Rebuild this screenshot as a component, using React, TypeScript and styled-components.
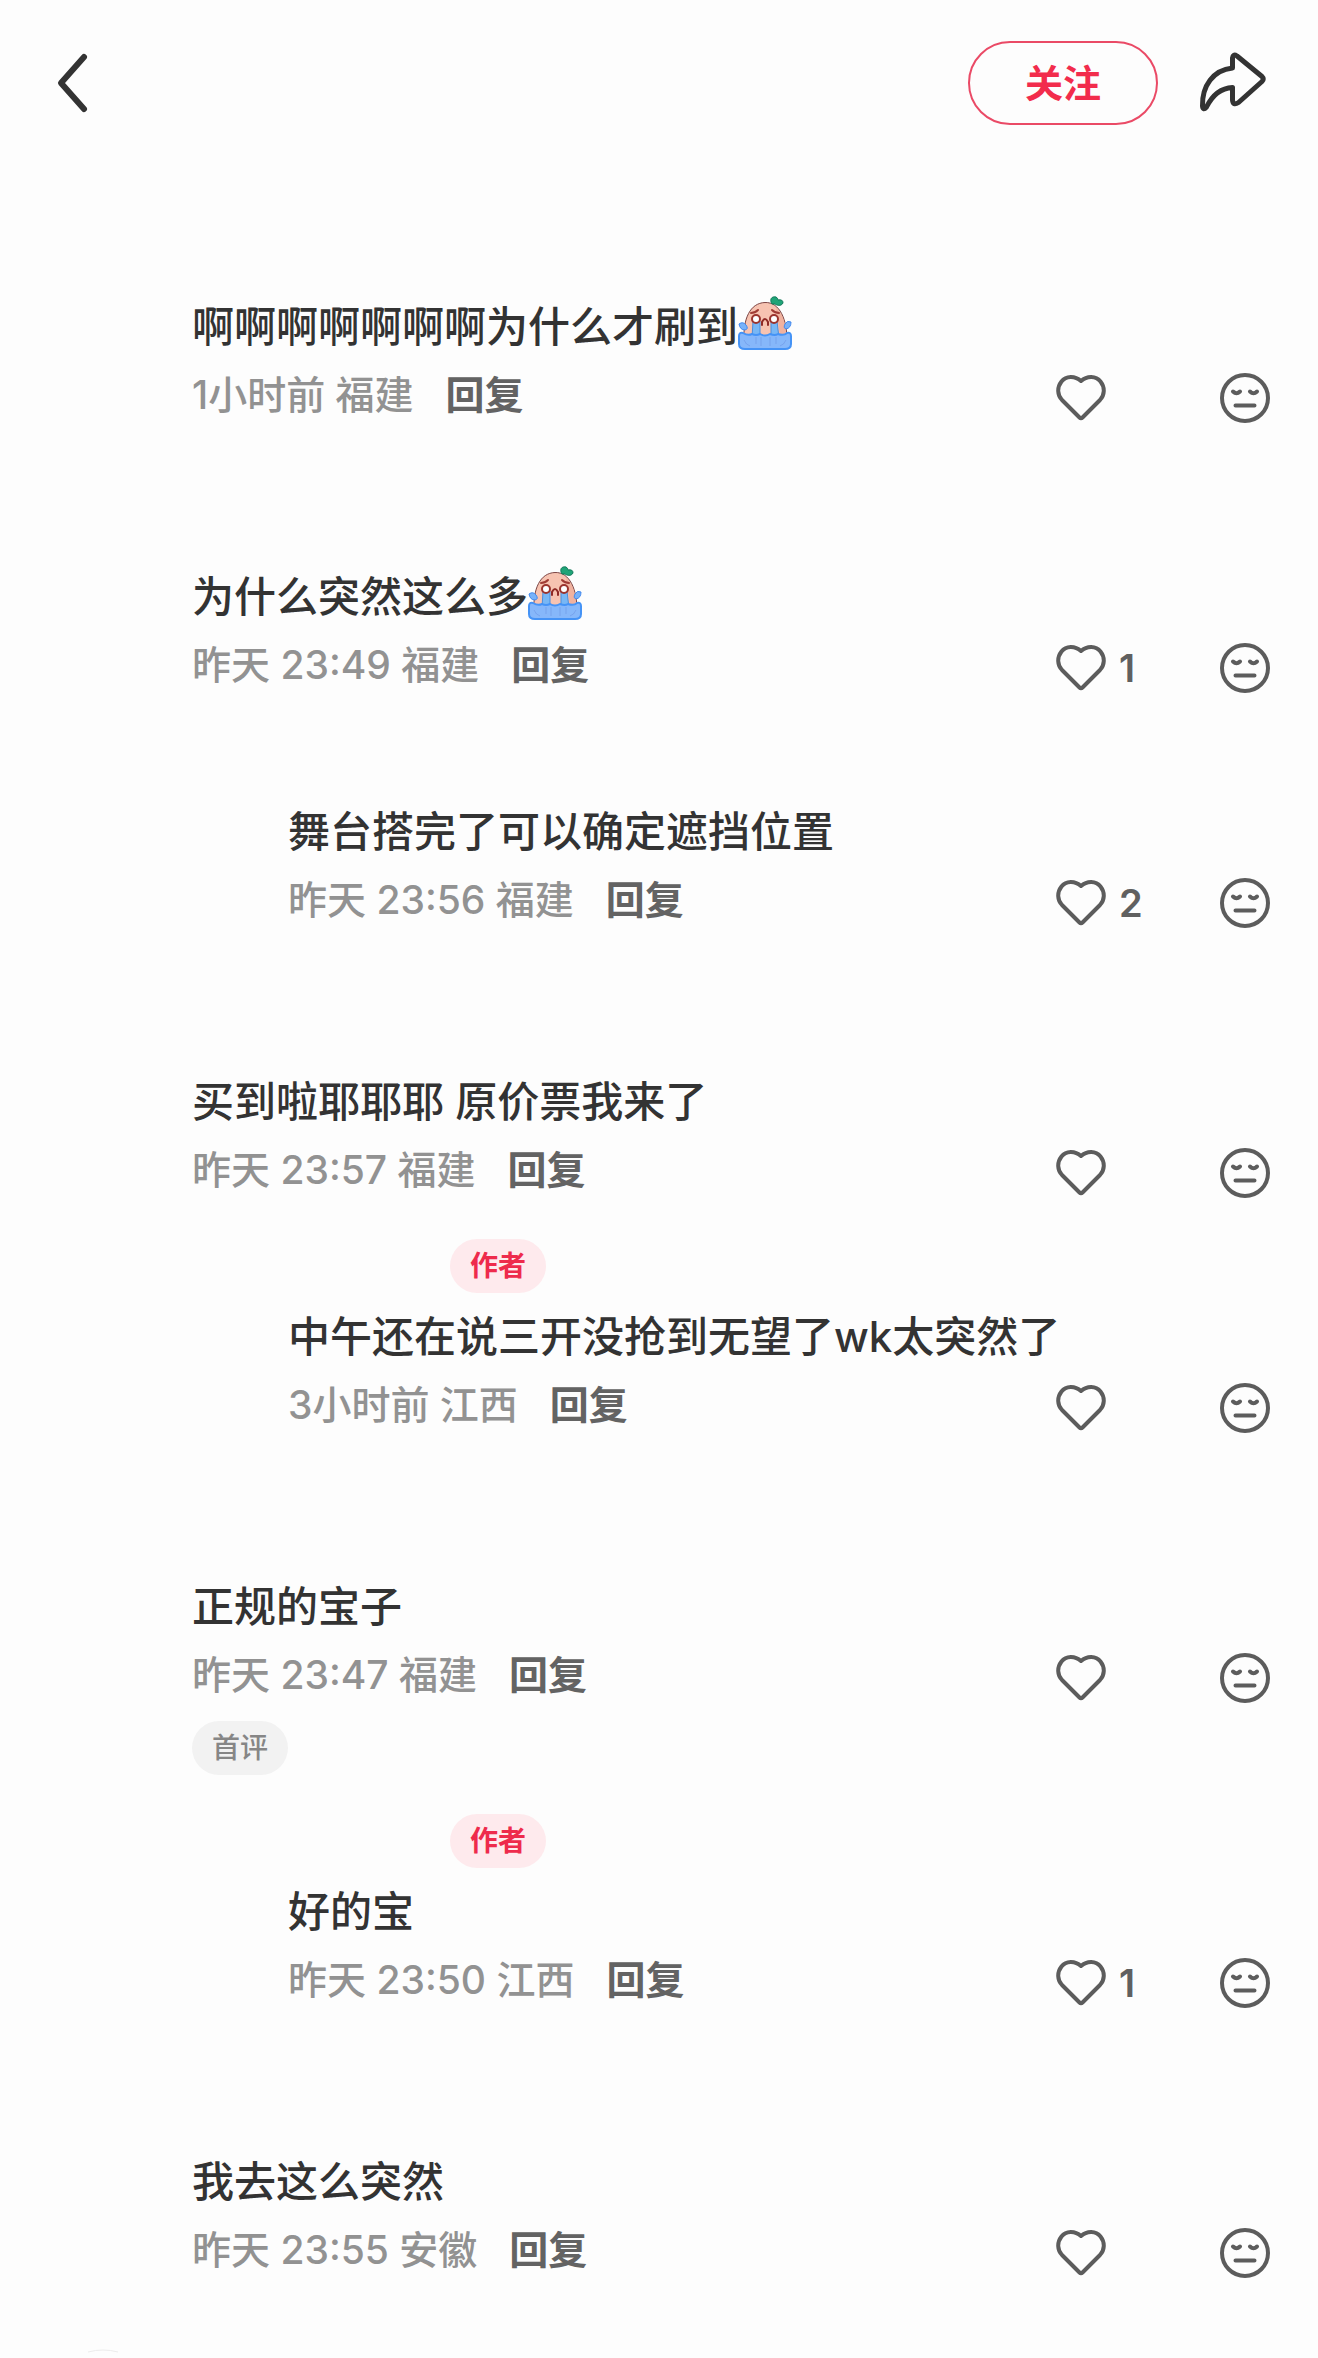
import React from "react";
import styled, { createGlobalStyle } from "styled-components";

const GlobalStyle = createGlobalStyle`
  *, *::before, *::after { box-sizing: border-box; }
  html, body { margin: 0; background: #fdfdfd; }
  body {
    font-family: Inter, "Noto Sans CJK SC", sans-serif;
    color: #333333;
    overflow-x: hidden;
  }
  button { font: inherit; color: inherit; background: none; border: 0; padding: 0; margin: 0; cursor: pointer; }
  svg { display: block; flex: none; }
`;

const Page = styled.div`
  width: 100%;
  background: #fdfdfd;
`;

const TopBar = styled.header`
  display: flex;
  align-items: center;
  height: 166px;
  padding: 0 48px;
`;

const BackButton = styled.button`
  margin-right: auto;
`;

const FollowButton = styled.button`
  width: 190px;
  height: 84px;
  margin-right: 40px;
  border: 2px solid #ea4a66;
  border-radius: 42px;
  color: #f22c4c;
  font-size: 38px;
  font-weight: 700;
  line-height: 56px;
`;

const Threads = styled.main`
  display: flex;
  flex-direction: column;
  gap: 60px;
  padding: 55px 48px 0;
`;

const Thread = styled.section`
  display: flex;
  flex-direction: column;
  gap: 25px;
`;

const Comment = styled.article<{ $nested?: boolean }>`
  padding-left: ${(p) => (p.$nested ? 240 : 144)}px;
`;

const HeadLine = styled.div`
  display: flex;
  align-items: center;
  height: 70px;
`;

const FootLine = styled(HeadLine)`
  padding-top: 4px;
`;

const NameSlot = styled.div`
  width: 162px;
`;

const Tag = styled.span<{ $tone: "author" | "first" }>`
  height: 54px;
  padding: 0 20px;
  border-radius: 27px;
  font-size: 28px;
  line-height: 54px;
  font-weight: ${(p) => (p.$tone === "author" ? 700 : 500)};
  color: ${(p) => (p.$tone === "author" ? "#ee2b4c" : "#868686")};
  background: ${(p) => (p.$tone === "author" ? "#feeaed" : "#f2f2f2")};
`;

const Body = styled.p`
  display: flex;
  align-items: center;
  height: 70px;
  margin: 0;
  padding-bottom: 6px;
  font-size: 42px;
  font-weight: 500;
  white-space: pre;
`;

const Meta = styled.div`
  display: flex;
  align-items: center;
  height: 70px;
  padding-bottom: 2px;
  font-size: 39px;
  font-weight: 500;
  line-height: 56px;
`;

const When = styled.span`
  color: #929292;
  white-space: pre;
`;

const Reply = styled.button`
  margin-left: 32px;
  margin-right: auto;
  color: #636363;
  font-weight: 700;
`;

const ActionButton = styled.button<{ $wide?: boolean }>`
  display: flex;
  align-items: center;
  gap: 13px;
  width: ${(p) => (p.$wide ? 164 : 50)}px;
  padding-top: 6px;
  color: #606060;
  font-size: 38px;
  font-weight: 600;
`;

const NextAvatar = styled.div`
  padding: 3px 0 0 39px;
  height: 10px;
`;

const BackIcon = () => (
  <svg width="48" height="64" viewBox="0 0 48 64" fill="none" stroke="#333" strokeWidth="6" strokeLinecap="round" strokeLinejoin="round">
    <path d="M36 6 13 32l23 26" />
  </svg>
);

const ShareIcon = () => (
  <svg width="72" height="64" viewBox="0 2 72 64" fill="none" stroke="#333" strokeWidth="5" strokeLinecap="round" strokeLinejoin="round">
    <path d="M34.500 9Q35 4.500 39 7L64 27.500Q66.500 30 64 32.500L40.500 53.500Q35 57 34.500 51V38.500C24 39 15 45 8.500 58Q5 62 4.500 57C4 37 15 21 34.500 19Z" />
  </svg>
);

const HeartIcon = () => (
  <svg width="50" height="50" viewBox="0 0 50 50" fill="none" stroke="#5c5c5c" strokeWidth="4" strokeLinecap="round" strokeLinejoin="round">
    <path d="M25 8C19 2.500 10 2.500 5.500 8.500C0.800 14.500 1.300 22 6 27L23.500 44.500Q25 46 26.500 44.500L44 27C48.700 22 49.200 14.500 44.500 8.500C40 2.500 31 2.500 25 8Z" />
  </svg>
);

const FaceIcon = () => (
  <svg width="50" height="50" viewBox="0 0 50 50" fill="none" stroke="#5c5c5c" strokeWidth="4" strokeLinecap="round" strokeLinejoin="round">
    <circle cx="25" cy="25" r="23" />
    <path d="M13 18.500Q16.500 22 20 18.500M30 18.500Q33.500 22 37 18.500M15.500 32.500H34.500" />
  </svg>
);

const CryingEmoji = () => (
  <svg width="54" height="54" viewBox="0 0 54 54" role="img" aria-label="哭">
    <path d="M6 44C5 23 12 7 27 6.500C42 6 49 24 49 44Z" fill="#f7c3b1" stroke="#7c4545" strokeWidth="1" />
    <path d="M38 12C45 18 48 29 48 39L42 39Z" fill="#eda792" opacity=".6" />
    <path d="M34 8C31 3 34 0 38 1Q40 2 40 4Q45 3 45 7C43 11 38 9 37 8Z" fill="#1fa477" stroke="#15795b" strokeWidth="1" />
    <path d="M13 17Q17 17 20 14M41 17Q37 17 34 14" fill="none" stroke="#a03c35" strokeWidth="2" strokeLinecap="round" />
    <path d="M15 25H22V42H14ZM33 25H39L41 42H33Z" fill="#78b7f5" stroke="#4b8edc" strokeWidth="1" />
    <circle cx="18" cy="23" r="4" fill="#fff" stroke="#9b352f" strokeWidth="2" />
    <circle cx="36" cy="23" r="4" fill="#fff" stroke="#9b352f" strokeWidth="2" />
    <path d="M24 29V26Q27 20 30 26V29" fill="none" stroke="#8f2925" strokeWidth="2" strokeLinecap="round" />
    <path d="M1 28Q5 25 8 29Q11 33 7 34Q2 34 1 28ZM53 26Q49 24 47 28Q45 32 48 33Q53 32 53 26Z" fill="#79b2f8" stroke="#4188ee" strokeWidth="1" />
    <path d="M1 40Q1 36 5 37Q10 40 14 38Q18 40 22 38Q27 41 32 38Q37 40 40 38Q46 40 49 37Q53 36 53 40V48Q53 53 47 53H7Q1 53 1 48Z" fill="#86b7fa" stroke="#4593f6" strokeWidth="2" />
    <path d="M18 41V48M23 41V50M32 41V50M38 41V48M6 44Q8 49 12 50M48 44Q46 49 42 50" fill="none" stroke="#698fe0" strokeWidth="1" opacity=".5" />
  </svg>
);

type Item = {
  text: string;
  crying?: boolean;
  when: string;
  likes?: number;
  author?: boolean;
  first?: boolean;
};

const threads: Item[][] = [
  [{ text: "啊啊啊啊啊啊啊为什么才刷到", crying: true, when: "1小时前 福建" }],
  [
    { text: "为什么突然这么多", crying: true, when: "昨天 23:49 福建", likes: 1 },
    { text: "舞台搭完了可以确定遮挡位置", when: "昨天 23:56 福建", likes: 2 },
  ],
  [
    { text: "买到啦耶耶耶 原价票我来了", when: "昨天 23:57 福建" },
    { text: "中午还在说三开没抢到无望了wk太突然了", when: "3小时前 江西", author: true },
  ],
  [
    { text: "正规的宝子", when: "昨天 23:47 福建", first: true },
    { text: "好的宝", when: "昨天 23:50 江西", likes: 1, author: true },
  ],
  [{ text: "我去这么突然", when: "昨天 23:55 安徽" }],
];

const CommentItem = ({ item, nested }: { item: Item; nested: boolean }) => (
  <Comment $nested={nested}>
    <HeadLine>
      <NameSlot />
      {item.author && <Tag $tone="author">作者</Tag>}
    </HeadLine>
    <Body>
      {item.text}
      {item.crying && <CryingEmoji />}
    </Body>
    <Meta>
      <When>{item.when}</When>
      <Reply>回复</Reply>
      <ActionButton $wide aria-label="点赞">
        <HeartIcon />
        {item.likes}
      </ActionButton>
      <ActionButton aria-label="不喜欢">
        <FaceIcon />
      </ActionButton>
    </Meta>
    {item.first && (
      <FootLine>
        <Tag $tone="first">首评</Tag>
      </FootLine>
    )}
  </Comment>
);

export default function App() {
  return (
    <Page>
      <GlobalStyle />
      <TopBar>
        <BackButton aria-label="返回">
          <BackIcon />
        </BackButton>
        <FollowButton>关注</FollowButton>
        <button aria-label="分享">
          <ShareIcon />
        </button>
      </TopBar>
      <Threads>
        {threads.map((items, t) => (
          <Thread key={t}>
            {items.map((item, i) => (
              <CommentItem key={i} item={item} nested={i > 0} />
            ))}
          </Thread>
        ))}
        <NextAvatar>
          <svg width="32" height="4" viewBox="0 0 32 4" fill="none" stroke="#ececec" strokeWidth="1">
            <path d="M1 3Q16 -1 31 3" />
          </svg>
        </NextAvatar>
      </Threads>
    </Page>
  );
}
